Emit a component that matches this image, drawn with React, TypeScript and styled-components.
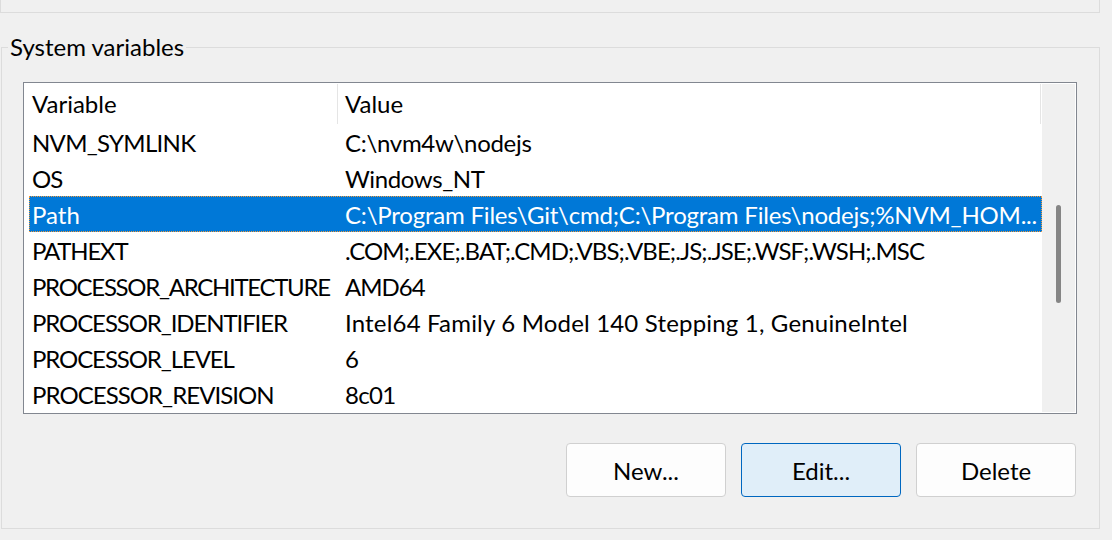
import React from "react";
import styled, { createGlobalStyle } from "styled-components";

const Global = createGlobalStyle`
  html, body {
    margin: 0;
    padding: 0;
    background: #f0f0f0;
  }
  body {
    font-family: Lato, "Segoe UI", sans-serif;
    font-size: 24px;
    color: #000;
  }
  * { box-sizing: border-box; }
`;

const Page = styled.div`
  width: 1100px;
  display: flex;
  flex-direction: column;
`;

const PrevGroup = styled.div`
  height: 13px;
  border: 1px solid #dcdcdc;
  border-top: none;
`;

const Group = styled.fieldset`
  margin: 18px 0 0 1px;
  padding: 0;
  border: 1px solid #dcdcdc;
  min-width: 0;
`;

const Legend = styled.legend`
  margin-left: 6px;
  padding: 0 2px;
  line-height: 32px;
  font-size: 24px;
`;

const GroupBody = styled.div`
  padding: 19px 22px 31px 21px;
  display: flex;
  flex-direction: column;
`;

const ListView = styled.div`
  display: flex;
  height: 332px;
  border: 1px solid #828790;
  padding: 1px;
  background: #fff;
`;

const Table = styled.div`
  flex: 1;
  display: flex;
  flex-direction: column;
  min-width: 0;
`;

const Header = styled.div`
  display: flex;
  height: 40px;
  line-height: 40px;
`;

const HeaderCell = styled.div<{ $w?: number; $pad: number }>`
  ${(p) => (p.$w ? `width: ${p.$w}px; flex: none;` : "flex: 1;")}
  padding-left: ${(p) => p.$pad}px;
  border-right: 1px solid #e5e5e5;
  margin: 0 1px 0 0;
  white-space: nowrap;
`;

const Rows = styled.div`
  display: flex;
  flex-direction: column;
  padding-left: 4px;
`;

const Row = styled.div<{ $selected?: boolean }>`
  display: grid;
  grid-template-columns: 309px 1fr;
  height: 36px;
  padding-top: 1px;
  line-height: 35px;
  white-space: nowrap;
  background: ${(p) => (p.$selected ? "#0078d7" : "transparent")};
  color: ${(p) => (p.$selected ? "#fff" : "#000")};
  outline: ${(p) => (p.$selected ? "1px dotted #f39a3a" : "none")};
  outline-offset: -1px;
`;

const Cell = styled.div<{ $pad: number; $track: number }>`
  padding-left: ${(p) => p.$pad}px;
  letter-spacing: ${(p) => p.$track}px;
  overflow: hidden;
  text-overflow: ellipsis;
`;

const ScrollBar = styled.div`
  width: 33px;
  flex: none;
  background: #f0f0f0;
  display: flex;
  flex-direction: column;
  align-items: center;
  padding-top: 121px;
`;

const Thumb = styled.div`
  width: 5px;
  height: 98px;
  border-radius: 3px;
  background: #858585;
`;

const ButtonRow = styled.div`
  display: flex;
  justify-content: flex-end;
  gap: 15px;
  margin-top: 29px;
  padding-right: 1px;
`;

const Button = styled.button<{ $default?: boolean }>`
  width: 160px;
  height: 54px;
  border-radius: 4px;
  font-family: inherit;
  font-size: 24px;
  color: #000;
  padding: 0;
  border: 1px solid ${(p) => (p.$default ? "#0067c0" : "#d0d0d0")};
  background: ${(p) => (p.$default ? "#e0eef9" : "#fdfdfd")};
`;

type Item = {
  name: string;
  nameTrack: number;
  value: string;
  valueTrack: number;
  selected?: boolean;
};

const rows: Item[] = [
  { name: "NVM_SYMLINK", nameTrack: -0.7, value: "C:\\nvm4w\\nodejs", valueTrack: -0.3 },
  { name: "OS", nameTrack: -1, value: "Windows_NT", valueTrack: -0.4 },
  {
    name: "Path",
    nameTrack: 0,
    value: "C:\\Program Files\\Git\\cmd;C:\\Program Files\\nodejs;%NVM_HOM...",
    valueTrack: -0.2,
    selected: true,
  },
  {
    name: "PATHEXT",
    nameTrack: -1.2,
    value: ".COM;.EXE;.BAT;.CMD;.VBS;.VBE;.JS;.JSE;.WSF;.WSH;.MSC",
    valueTrack: -0.9,
  },
  { name: "PROCESSOR_ARCHITECTURE", nameTrack: -1.3, value: "AMD64", valueTrack: -1 },
  {
    name: "PROCESSOR_IDENTIFIER",
    nameTrack: -1.1,
    value: "Intel64 Family 6 Model 140 Stepping 1, GenuineIntel",
    valueTrack: 0.18,
  },
  { name: "PROCESSOR_LEVEL", nameTrack: -1.1, value: "6", valueTrack: 0 },
  { name: "PROCESSOR_REVISION", nameTrack: -0.95, value: "8c01", valueTrack: -0.7 },
];

export default function App() {
  return (
    <>
      <Global />
      <Page>
        <PrevGroup />
        <Group>
          <Legend>System variables</Legend>
          <GroupBody>
            <ListView>
              <Table>
                <Header>
                  <HeaderCell $w={313} $pad={7}>Variable</HeaderCell>
                  <HeaderCell $pad={6}>Value</HeaderCell>
                </Header>
                <Rows>
                  {rows.map((r) => (
                    <Row key={r.name} $selected={r.selected}>
                      <Cell $pad={3} $track={r.nameTrack}>{r.name}</Cell>
                      <Cell $pad={7} $track={r.valueTrack}>{r.value}</Cell>
                    </Row>
                  ))}
                </Rows>
              </Table>
              <ScrollBar>
                <Thumb />
              </ScrollBar>
            </ListView>
            <ButtonRow>
              <Button>New...</Button>
              <Button $default>Edit...</Button>
              <Button>Delete</Button>
            </ButtonRow>
          </GroupBody>
        </Group>
      </Page>
    </>
  );
}
